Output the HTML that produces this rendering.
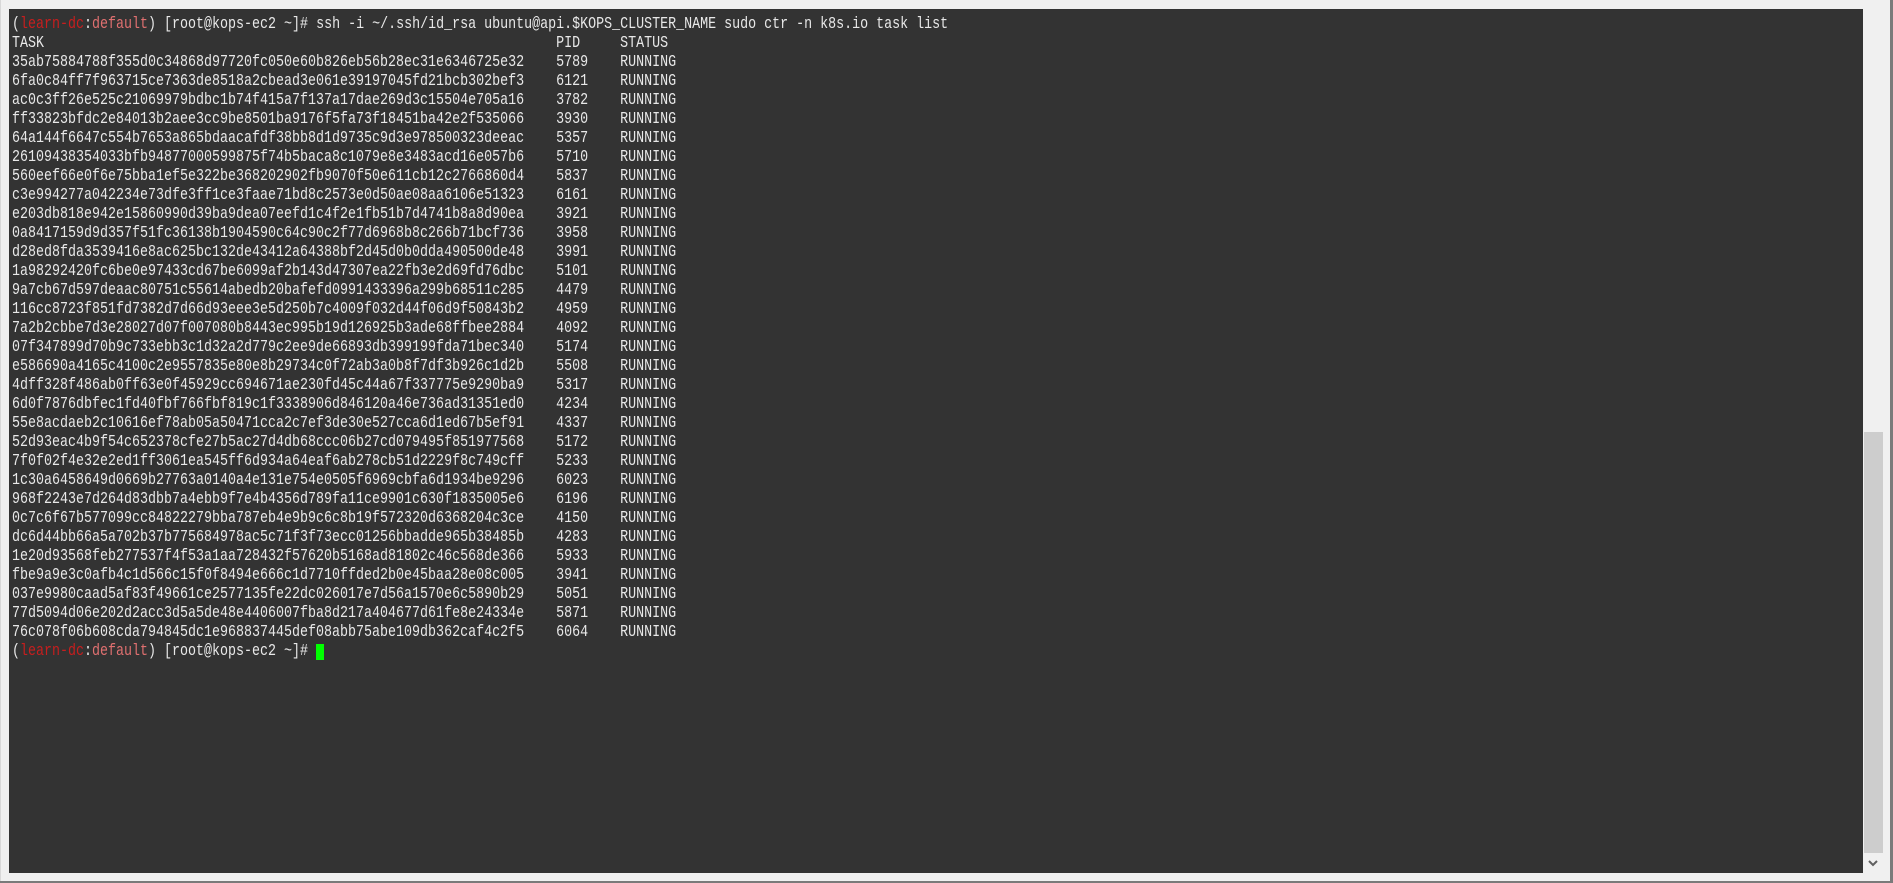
<!DOCTYPE html>
<html><head><meta charset="utf-8"><style>
html,body{margin:0;padding:0;width:1893px;height:883px;overflow:hidden;background:#f0f0f0;position:relative}
.term{position:absolute;left:9px;top:9px;width:1854px;height:864px;background:#333333}
pre{position:absolute;left:12px;top:15px;margin:0;font-family:"Liberation Mono",monospace;font-size:17px;line-height:19px;color:#e8e8e8;transform:scaleX(0.7843);transform-origin:0 0;white-space:pre}
.r{color:#c81e1e}.s{color:#e07070}
.cur{position:absolute;left:316px;top:644px;width:8px;height:16px;background:#00ff00}
.sb{position:absolute;left:1864px;top:432px;width:19px;height:421px;background:#cdcdcd}
.rb{position:absolute;left:1890px;top:0;width:3px;height:883px;background:#7a7a7a}
.bb{position:absolute;left:0;top:881px;width:1893px;height:2px;background:#7a7a7a}
.lb{position:absolute;left:0;top:0;width:1px;height:883px;background:#d8d8d8}
</style></head><body>
<div class="lb"></div>
<div class="term"></div>
<pre>(<span class="r">learn-dc</span>:<span class="s">default</span>) [root@kops-ec2 ~]# ssh -i ~/.ssh/id_rsa ubuntu@api.$KOPS_CLUSTER_NAME sudo ctr -n k8s.io task list
TASK                                                                PID     STATUS
35ab75884788f355d0c34868d97720fc050e60b826eb56b28ec31e6346725e32    5789    RUNNING
6fa0c84ff7f963715ce7363de8518a2cbead3e061e39197045fd21bcb302bef3    6121    RUNNING
ac0c3ff26e525c21069979bdbc1b74f415a7f137a17dae269d3c15504e705a16    3782    RUNNING
ff33823bfdc2e84013b2aee3cc9be8501ba9176f5fa73f18451ba42e2f535066    3930    RUNNING
64a144f6647c554b7653a865bdaacafdf38bb8d1d9735c9d3e978500323deeac    5357    RUNNING
26109438354033bfb94877000599875f74b5baca8c1079e8e3483acd16e057b6    5710    RUNNING
560eef66e0f6e75bba1ef5e322be368202902fb9070f50e611cb12c2766860d4    5837    RUNNING
c3e994277a042234e73dfe3ff1ce3faae71bd8c2573e0d50ae08aa6106e51323    6161    RUNNING
e203db818e942e15860990d39ba9dea07eefd1c4f2e1fb51b7d4741b8a8d90ea    3921    RUNNING
0a8417159d9d357f51fc36138b1904590c64c90c2f77d6968b8c266b71bcf736    3958    RUNNING
d28ed8fda3539416e8ac625bc132de43412a64388bf2d45d0b0dda490500de48    3991    RUNNING
1a98292420fc6be0e97433cd67be6099af2b143d47307ea22fb3e2d69fd76dbc    5101    RUNNING
9a7cb67d597deaac80751c55614abedb20bafefd0991433396a299b68511c285    4479    RUNNING
116cc8723f851fd7382d7d66d93eee3e5d250b7c4009f032d44f06d9f50843b2    4959    RUNNING
7a2b2cbbe7d3e28027d07f007080b8443ec995b19d126925b3ade68ffbee2884    4092    RUNNING
07f347899d70b9c733ebb3c1d32a2d779c2ee9de66893db399199fda71bec340    5174    RUNNING
e586690a4165c4100c2e9557835e80e8b29734c0f72ab3a0b8f7df3b926c1d2b    5508    RUNNING
4dff328f486ab0ff63e0f45929cc694671ae230fd45c44a67f337775e9290ba9    5317    RUNNING
6d0f7876dbfec1fd40fbf766fbf819c1f3338906d846120a46e736ad31351ed0    4234    RUNNING
55e8acdaeb2c10616ef78ab05a50471cca2c7ef3de30e527cca6d1ed67b5ef91    4337    RUNNING
52d93eac4b9f54c652378cfe27b5ac27d4db68ccc06b27cd079495f851977568    5172    RUNNING
7f0f02f4e32e2ed1ff3061ea545ff6d934a64eaf6ab278cb51d2229f8c749cff    5233    RUNNING
1c30a6458649d0669b27763a0140a4e131e754e0505f6969cbfa6d1934be9296    6023    RUNNING
968f2243e7d264d83dbb7a4ebb9f7e4b4356d789fa11ce9901c630f1835005e6    6196    RUNNING
0c7c6f67b577099cc84822279bba787eb4e9b9c6c8b19f572320d6368204c3ce    4150    RUNNING
dc6d44bb66a5a702b37b775684978ac5c71f3f73ecc01256bbadde965b38485b    4283    RUNNING
1e20d93568feb277537f4f53a1aa728432f57620b5168ad81802c46c568de366    5933    RUNNING
fbe9a9e3c0afb4c1d566c15f0f8494e666c1d7710ffded2b0e45baa28e08c005    3941    RUNNING
037e9980caad5af83f49661ce2577135fe22dc026017e7d56a1570e6c5890b29    5051    RUNNING
77d5094d06e202d2acc3d5a5de48e4406007fba8d217a404677d61fe8e24334e    5871    RUNNING
76c078f06b608cda794845dc1e968837445def08abb75abe109db362caf4c2f5    6064    RUNNING
(<span class="r">learn-dc</span>:<span class="s">default</span>) [root@kops-ec2 ~]# </pre>
<div class="cur"></div>
<div class="sb"></div>
<svg style="position:absolute;left:1867px;top:858px" width="12" height="10" viewBox="0 0 12 10"><path d="M2 3 L6 7 L10 3" fill="none" stroke="#606060" stroke-width="2"/></svg>
<div class="rb"></div>
<div class="bb"></div>
</body></html>
